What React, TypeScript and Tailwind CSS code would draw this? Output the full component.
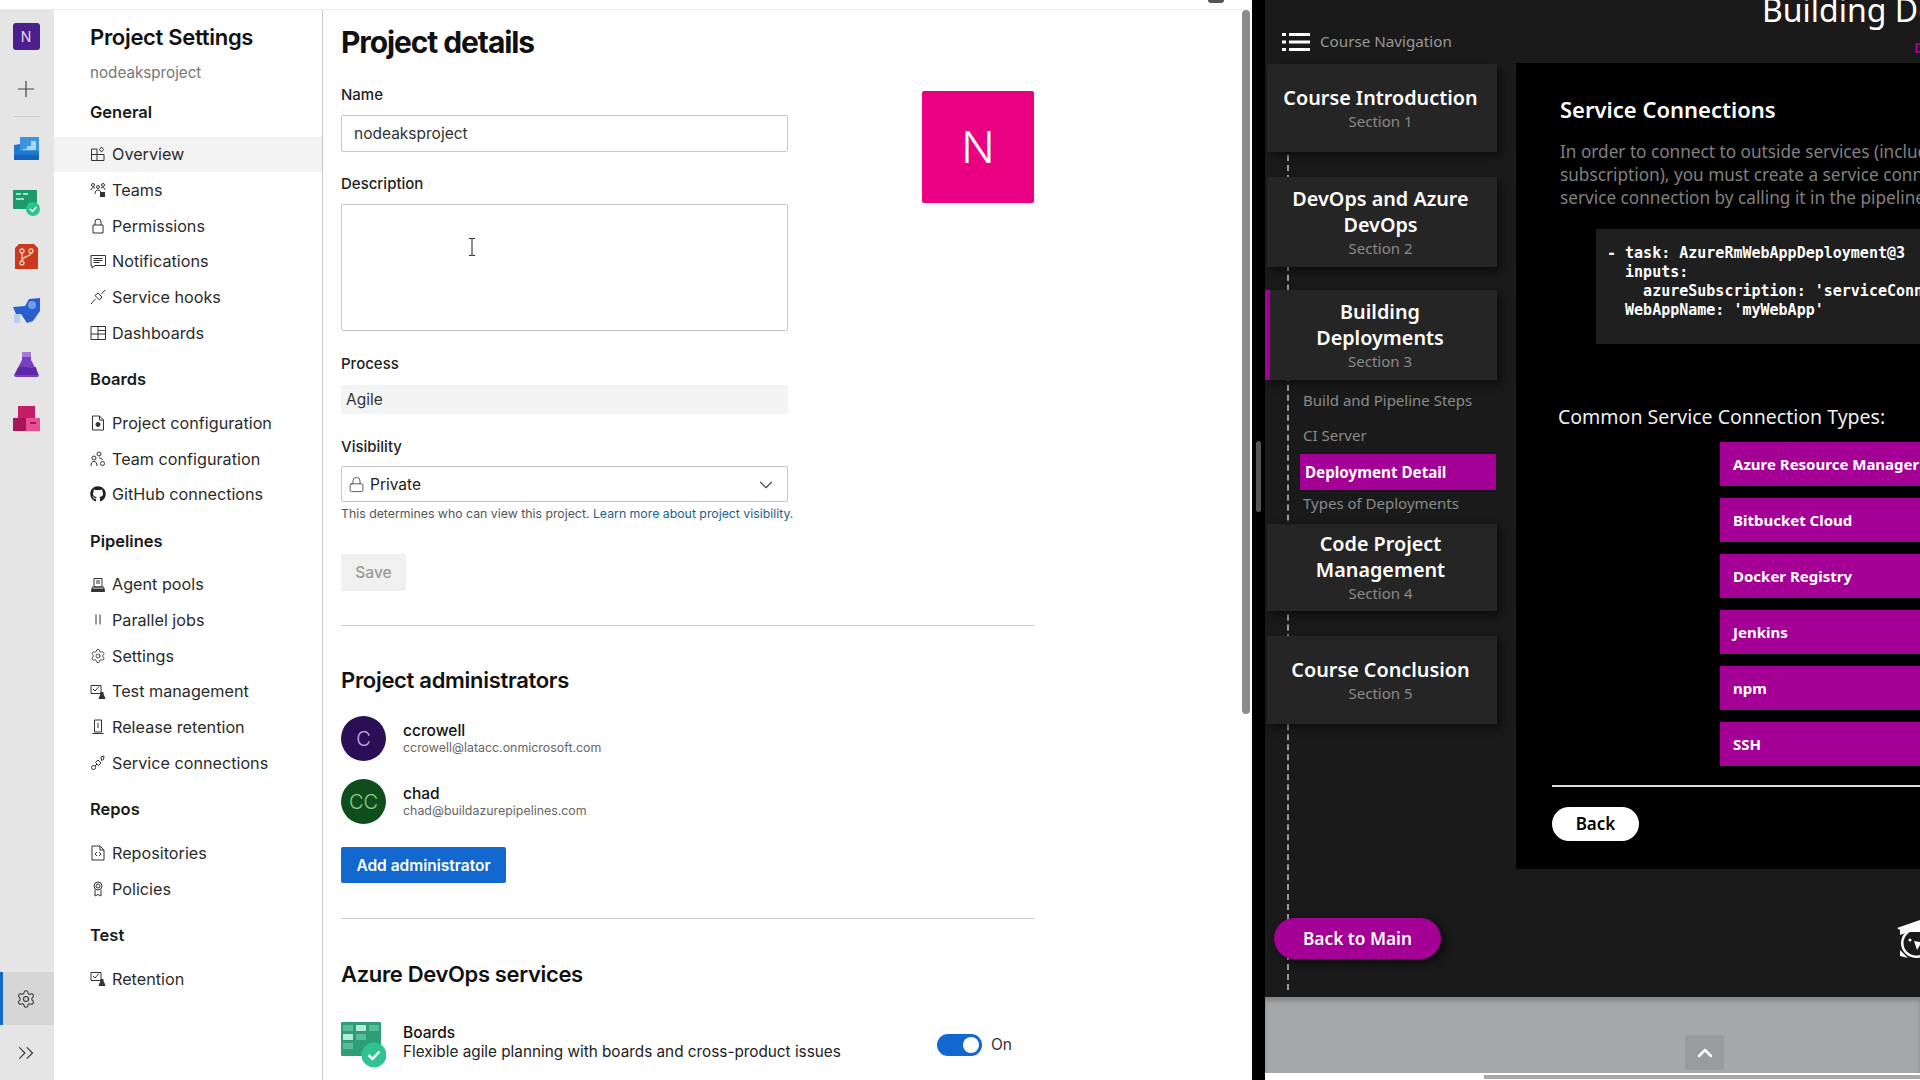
import type { ReactNode } from "react";
import { ChevronDown, ChevronUp, ChevronsRight, Lock, Plus, Settings } from "lucide-react";
import { FaGithub } from "react-icons/fa";

type IconProps = { children: ReactNode };

// line icons at the size of the Azure DevOps nav glyphs
function Glyph({ children }: IconProps) {
  return (
    <svg viewBox="0 0 16 16" fill="none" stroke="#333" strokeWidth="1" className="h-4 w-4 shrink-0">
      {children}
    </svg>
  );
}

const icons: Record<string, ReactNode> = {
  overview: (
    <Glyph>
      <path d="M1.5 3h5.5v11.5H1.5zM1.5 8.5h12.5v6H7M9.5 3.5l2-2.5 2 2.5-2 2.5z" />
    </Glyph>
  ),
  teams: (
    <Glyph>
      <circle cx="3" cy="3" r="1.5" />
      <circle cx="8" cy="5" r="1.5" />
      <circle cx="13" cy="3" r="1.5" />
      <path d="M1 8c0-2 2-3 4-2M15 8c0-2-2-3-4-2M5 12c0-3 1.500-4 3-4s3 1 3 4" />
      <rect x="10.500" y="10.500" width="4" height="4" fill="#333" />
    </Glyph>
  ),
  lock: (
    <Glyph>
      <path d="M3 7h10v8H3zM5 7V4a3 3 0 0 1 6 0v3" />
    </Glyph>
  ),
  chat: (
    <Glyph>
      <path d="M1 2.500h14.500v10H5l-3 2.500v-2.500H1zM3.500 5.500h9M3.500 7.500h9M3.500 9.500h6" />
    </Glyph>
  ),
  hook: (
    <Glyph>
      <path d="M1 15l3.500-4M11.500 5L15 1M5 6.500l4.500 4.500 2.500-3-4-4zM4.500 11l1-1" />
    </Glyph>
  ),
  dash: (
    <Glyph>
      <path d="M1 1.500h14.500v13H1zM1 9h14.500M8 1.500V14.500M8 5.500h7.500" />
    </Glyph>
  ),
  config: (
    <Glyph>
      <path d="M2.500 1h7l4 4v10h-11zM9.500 1v4h4" />
      <circle cx="8" cy="9.500" r="2" fill="#333" />
    </Glyph>
  ),
  teamcfg: (
    <Glyph>
      <circle cx="9" cy="3" r="2" />
      <circle cx="4" cy="7" r="2" />
      <path d="M1 15c0-3 1-4.500 3-4.500s3 1.500 3 4.500M9 7c2 0 3 .500 3.500 2" />
      <circle cx="12.500" cy="12.500" r="2" />
    </Glyph>
  ),
  github: <FaGithub className="h-4 w-4 shrink-0 text-[#222]" />,
  agent: (
    <Glyph>
      <path d="M4 1.500h8V10H4zM6 4h4M6 6h4M2.500 10h11l1 4.500h-13z" />
      <rect x="2" y="12" width="12" height="2.500" fill="#333" />
    </Glyph>
  ),
  parallel: (
    <Glyph>
      <path d="M6 2.500v10M10 2.500v10" />
    </Glyph>
  ),
  settings: <Settings className="h-4 w-4 shrink-0 text-[#333]" strokeWidth={1.3} />,
  test: (
    <Glyph>
      <path d="M1 1.500h10v8H1zM3 5l2 2 4-4.500" />
      <path d="M11 8v2l-2 4.500h6L13 10V8" fill="#333" />
    </Glyph>
  ),
  release: (
    <Glyph>
      <path d="M4.500 1h7v12h-7zM2.500 14.500h11M8 4v5" />
    </Glyph>
  ),
  plug: (
    <Glyph>
      <circle cx="3.500" cy="12.500" r="2" />
      <path d="M5 11l2-2M8 5l3 3-2.500 2.500-3-3zM11 5l1-1" />
      <path d="M11 2l3-1-.5 3.500-2 1z" />
    </Glyph>
  ),
  repo: (
    <Glyph>
      <path d="M2 1h8l4 4v10H2zM10 1v4h4M7 7l-2 2 2 2M9 7l2 2-2 2" />
    </Glyph>
  ),
  policy: (
    <Glyph>
      <circle cx="8" cy="5" r="4" />
      <circle cx="8" cy="5" r="2" />
      <path d="M5 9v6l3-1.500 3 1.500V9" />
    </Glyph>
  ),
};

const navSections = [
  {
    title: "Boards",
    items: [
      ["config", "Project configuration"],
      ["teamcfg", "Team configuration"],
      ["github", "GitHub connections"],
    ],
  },
  {
    title: "Pipelines",
    items: [
      ["agent", "Agent pools"],
      ["parallel", "Parallel jobs"],
      ["settings", "Settings"],
      ["test", "Test management"],
      ["release", "Release retention"],
      ["plug", "Service connections"],
    ],
  },
  {
    title: "Repos",
    items: [
      ["repo", "Repositories"],
      ["policy", "Policies"],
    ],
  },
  { title: "Test", items: [["test", "Retention"]] },
];

const generalItems = [
  ["overview", "Overview"],
  ["teams", "Teams"],
  ["lock", "Permissions"],
  ["chat", "Notifications"],
  ["hook", "Service hooks"],
  ["dash", "Dashboards"],
];

const connectionTypes = ["Azure Resource Manager", "Bitbucket Cloud", "Docker Registry", "Jenkins", "npm", "SSH"];

function NavRow({ icon, label, active }: { icon: string; label: string; active?: boolean }) {
  return (
    <div className={`flex h-[35.7px] items-center gap-[6px] pl-[36px] text-[16.2px] text-[#2b2b2b] ${active ? "bg-[#f3f3f3]" : ""}`}>
      {icons[icon]}
      <span>{label}</span>
    </div>
  );
}

function RailIcons() {
  return (
    <div className="flex flex-col items-center">
      <svg viewBox="0 0 27 27" className="h-[27px] w-[27px]">
        <path d="M7 2 H26 V24 a1 1 0 0 1-1 1 H2 a1 1 0 0 1-1-1 V10 L7 9z" fill="#1f78d1" />
        <path d="M7 2 H26 V16 H7z" fill="#3d93de" />
        <path d="M10 14 H14 V11 H18 V6 H23 V15 H10z" fill="#a8d8f5" />
        <path d="M1 20 H26 V24 a1 1 0 0 1-1 1 H2 a1 1 0 0 1-1-1z" fill="#1565b8" />
      </svg>
      <svg viewBox="0 0 27 27" className="mt-[27px] h-[27px] w-[27px]">
        <rect x="0" y="1" width="24" height="19" rx="1" fill="#1d9a6c" />
        <path d="M3 5h5M10 5h5M3 10h8" stroke="#9fe0c6" strokeWidth="2" />
        <circle cx="20" cy="20" r="7" fill="#2dc48d" />
        <path d="M17 20l2.500 2.500 4-4.500" stroke="#fff" strokeWidth="1.500" fill="none" />
      </svg>
      <svg viewBox="0 0 27 27" className="mt-[27px] h-[27px] w-[27px]">
        <path d="M2 5l4-4h15l4 4v21H2z" fill="#cc3a1e" />
        <circle cx="9" cy="8" r="2" fill="none" stroke="#f8c9ba" strokeWidth="1.300" />
        <circle cx="18" cy="8" r="2" fill="none" stroke="#f8c9ba" strokeWidth="1.300" />
        <circle cx="9" cy="20" r="2" fill="none" stroke="#f8c9ba" strokeWidth="1.300" />
        <path d="M9 10v8M18 10c0 4-9 3-9 8" stroke="#f8c9ba" strokeWidth="1.300" fill="none" />
      </svg>
      <svg viewBox="0 0 27 27" className="mt-[27px] h-[27px] w-[27px]">
        <path d="M0 10 L12 9 L16 2 L27 1 V14 L20 24 L14 26 L8 17 H3z" fill="#2a5fcf" />
        <circle cx="19" cy="8" r="4" fill="#6f9bea" />
        <path d="M1 17h6v9H1z" fill="#b5cdee" />
      </svg>
      <svg viewBox="0 0 27 27" className="mt-[27px] h-[27px] w-[27px]">
        <path d="M9 1h9v8l8 15a2 2 0 0 1-2 2H3a2 2 0 0 1-2-2L9 9z" fill="#7a3fc0" />
        <path d="M5 17c6-4 10 2 18-1l2 8H2z" fill="#5a28a8" />
        <path d="M9 1h9v5H9z" fill="#a678dc" />
      </svg>
      <svg viewBox="0 0 27 27" className="mt-[27px] h-[27px] w-[27px]">
        <path d="M5 1h17v13H5z" fill="#c41e6a" />
        <path d="M0 13h13v13H0z" fill="#a81657" />
        <path d="M13 13h14v13H13z" fill="#ea4f93" />
        <path d="M17 18h6" stroke="#a81657" strokeWidth="2" />
      </svg>
    </div>
  );
}

function Rail() {
  return (
    <aside className="flex w-[54px] shrink-0 flex-col items-center bg-[#e5e5e5] pt-[13px]">
      <div className="mr-[2px] flex h-[27px] w-[27px] items-center justify-center rounded-[3px] bg-[#4b1f8e] text-[14px] text-[#e6dcf5]">N</div>
      <div className="mr-[2px] flex flex-col items-center">
        <Plus className="mt-[26px] h-[26px] w-[26px] text-[#444]" strokeWidth={1.1} />
        <div className="mb-[18px] mt-[14px] h-px w-[27px] bg-[#d0d0d0]" />
        <RailIcons />
      </div>
      <div className="relative mb-[1px] mt-auto flex h-[53px] w-full items-center justify-center bg-[#d6d6d6] pr-[2px]">
        <div className="absolute bottom-0 left-0 top-0 w-[3px] bg-[#1568c8]" />
        <Settings className="h-[20px] w-[20px] text-[#333]" strokeWidth={1.3} />
      </div>
      <div className="flex h-[54px] items-center justify-center pr-[2px]">
        <ChevronsRight className="h-[26px] w-[26px] text-[#333]" strokeWidth={1} />
      </div>
    </aside>
  );
}

function SideNav() {
  return (
    <nav className="w-[269px] shrink-0 border-r border-[#c8c8c8] bg-white">
      <div className="pl-[36px] pt-[12px] text-[22px] font-semibold leading-[30px] tracking-[-0.3px] text-[#111]">Project Settings</div>
      <div className="pl-[36px] pt-[11px] text-[15.2px] leading-[20px] text-[#777]">nodeaksproject</div>
      <div className="pl-[36px] pt-[19px] text-[16.5px] font-semibold leading-[20px] text-[#1a1a1a]">General</div>
      <div className="pt-[14.5px]">
        {generalItems.map(([icon, label], i) => (
          <NavRow key={label} icon={icon} label={label} active={i === 0} />
        ))}
      </div>
      {navSections.map((s) => (
        <div key={s.title}>
          <div className="pl-[36px] pt-[18.5px] text-[16.5px] font-semibold leading-[20px] text-[#1a1a1a]">{s.title}</div>
          <div className="pt-[16px]">
            {s.items.map(([icon, label]) => (
              <NavRow key={label} icon={icon} label={label} />
            ))}
          </div>
        </div>
      ))}
    </nav>
  );
}

function Admin({ name, email, initials, avatar, text }: { name: string; email: string; initials: string; avatar: string; text: string }) {
  return (
    <div className="flex h-[45px] items-center gap-[17px]">
      <div className={`flex h-[45px] w-[45px] items-center justify-center rounded-full text-[20px] font-light ${avatar} ${text}`}>{initials}</div>
      <div className="pt-[2px]">
        <div className="text-[15.5px] font-medium leading-[16px] text-[#111]">{name}</div>
        <div className="text-[12.4px] leading-[17px] text-[#666]">{email}</div>
      </div>
    </div>
  );
}

function ProjectDetails() {
  return (
    <main className="relative min-w-0 flex-1 bg-white pl-[18px] pt-[14px]">
      <h1 className="text-[30px] font-bold leading-[36px] tracking-[-1.1px] text-[#111]">Project details</h1>

      <div className="flex">
        <div className="w-[447px]">
          <div className="mt-[25px] text-[15px] font-medium leading-[20px] text-[#222]">Name</div>
          <div className="mt-[10px] flex h-[37px] items-center rounded-[2px] border border-[#c8c8c8] pl-[12px] pt-[1px] text-[15.5px] text-[#333]">nodeaksproject</div>
          <div className="mt-[22px] text-[15px] font-medium leading-[20px] text-[#222]">Description</div>
          <div className="mt-[10px] h-[127px] rounded-[2px] border border-[#c8c8c8]" />
          <div className="mt-[23px] text-[15px] font-medium leading-[20px] text-[#222]">Process</div>
          <div className="mt-[11px] flex h-[29px] items-center bg-[#f4f4f4] pl-[5px] text-[15.5px] text-[#333]">Agile</div>
          <div className="mt-[23px] text-[15px] font-medium leading-[20px] text-[#222]">Visibility</div>
          <div className="mt-[9px] flex h-[36px] items-center rounded-[2px] border border-[#c8c8c8] pl-[6px] pr-[10px] pt-[1px] text-[15.5px] text-[#222]">
            <Lock className="h-[17px] w-[17px] text-[#444]" strokeWidth={1.2} />
            <span className="ml-[5px]">Private</span>
            <ChevronDown className="ml-auto h-[22px] w-[22px] text-[#444]" strokeWidth={1.2} />
          </div>
          <div className="mt-[3px] whitespace-nowrap text-[12.3px] leading-[18px] text-[#555]">
            This determines who can view this project. <span className="text-[#1c5f8f]">Learn more about project visibility.</span>
          </div>
          <div className="mt-[31px] flex h-[37px] w-[65px] items-center justify-center rounded-[2px] bg-[#f0f0f0] pt-[1px] text-[15.5px] font-medium text-[#999]">Save</div>
        </div>
        <div className="ml-[134px] mt-[31px] flex h-[112px] w-[112px] items-center justify-center rounded-[2px] bg-[#ea0083] text-[44px] font-light text-white">N</div>
      </div>

      <div className="w-[693px]">
        <div className="mt-[34px] h-px bg-[#d0d0d0]" />
        <h2 className="mt-[39px] text-[22px] font-semibold leading-[30px] tracking-[-0.3px] text-[#111]">Project administrators</h2>
        <div className="mt-[21px]">
          <Admin name="ccrowell" email="ccrowell@latacc.onmicrosoft.com" initials="C" avatar="bg-[#2b0f56]" text="text-[#c9a8ef]" />
        </div>
        <div className="mt-[18px]">
          <Admin name="chad" email="chad@buildazurepipelines.com" initials="CC" avatar="bg-[#0f4d1c]" text="text-[#8fce8f]" />
        </div>
        <div className="mt-[23px] flex h-[36px] w-[165px] items-center justify-center rounded-[2px] bg-[#1368cf] pt-[1px] text-[15.5px] font-semibold text-white">Add administrator</div>
        <div className="mt-[35px] h-px bg-[#d0d0d0]" />
        <h2 className="mt-[40px] text-[22px] font-semibold leading-[30px] tracking-[-0.35px] text-[#111]">Azure DevOps services</h2>
        <div className="mt-[33px] flex items-center gap-[17px] pr-[22px]">
          <svg viewBox="0 0 45 46" className="h-[46px] w-[45px] shrink-0">
            <rect x="0" y="0" width="40" height="34" rx="1" fill="#2f9e78" />
            <path d="M2 3h10v6H2zM15 3h10v6H15zM28 3h10v6H28zM2 12h10v6H2zM15 12h10v6H15zM2 21h10v6H2z" fill="#57bd98" />
            <path d="M2 12h10v6H2zM15 3h10v6H15z" fill="#b6ecd7" />
            <circle cx="33" cy="33" r="12.500" fill="#2fc48f" />
            <path d="M27.500 33l4 4 7-7.500" stroke="#fff" strokeWidth="2.500" fill="none" />
          </svg>
          <div className="-mt-[6px]">
            <div className="text-[15.5px] font-medium leading-[19px] text-[#111]">Boards</div>
            <div className="text-[15.3px] leading-[19px] text-[#222]">Flexible agile planning with boards and cross-product issues</div>
          </div>
          <div className="ml-auto flex items-center gap-[9px]">
            <div className="flex h-[22px] w-[45px] items-center justify-end rounded-full bg-[#1368cf] pr-[3px]">
              <div className="h-[16px] w-[16px] rounded-full bg-white" />
            </div>
            <span className="text-[15.5px] text-[#333]">On</span>
          </div>
        </div>
      </div>

      {/* text cursor sitting over the description box */}
      <svg viewBox="0 0 10 20" className="absolute left-[144px] top-[227px] h-[20px] w-[10px]" fill="none" stroke="#222" strokeWidth="1">
        <path d="M2 1.500h2.500L5 2.500l.5-1H8M5 2.500v15M2 18.500h2.500L5 17.500l.5 1H8" />
      </svg>
      <div className="absolute right-[2px] top-0 h-[704px] w-[8px] rounded-full bg-[#8c8c8c]" />
    </main>
  );
}

function CourseCard({ title, section, h, active }: { title: string[]; section: string; h: string; active?: boolean }) {
  return (
    <div className={`relative z-10 flex ${h} flex-col items-center justify-center bg-[#252525] shadow-[4px_4px_8px_rgba(0,0,0,0.55)] ${active ? "border-l-[5px] border-[#a50095] pr-[7px]" : "ml-[2px] pr-[3px]"}`}>
      {title.map((t) => (
        <div key={t} className="text-[19.8px] font-semibold leading-[26px] text-white">{t}</div>
      ))}
      <div className="text-[15px] leading-[20px] text-[#8a8a8a]">{section}</div>
    </div>
  );
}

function CourseNav() {
  return (
    <div className="relative w-[251px] shrink-0 pr-[19px]">
      <div className="absolute bottom-[7px] left-[22px] top-[155px] border-l-2 border-dashed border-[#9a9a9a]" />
      <div className="flex h-[63px] items-center gap-[10px] pl-[17px] pt-[20px] text-[15.2px] text-[#999]">
        <svg viewBox="0 0 28 18" className="h-[18px] w-[28px]" fill="#fff">
          <path d="M0 0h4v3H0zM7 0h21v3H7zM0 7.500h4v3H0zM7 7.500h21v3H7zM0 15h4v3H0zM7 15h21v3H7z" />
        </svg>
        <span>Course Navigation</span>
      </div>
      <div className="mt-[1px]">
        <CourseCard title={["Course Introduction"]} section="Section 1" h="h-[88px] pb-[1px]" />
      </div>
      <div className="mt-[25px]">
        <CourseCard title={["DevOps and Azure", "DevOps"]} section="Section 2" h="h-[90px]" />
      </div>
      <div className="mt-[23px]">
        <CourseCard title={["Building", "Deployments"]} section="Section 3" h="h-[90px]" active />
      </div>
      <div className="relative z-10 h-[144px] pl-[35px] pr-[1px] pt-px text-[15px] text-[#8a8a8a]">
        <div className="flex h-[36px] items-center pl-[3px] pt-[2px]">Build and Pipeline Steps</div>
        <div className="flex h-[36px] items-center pl-[3px]">CI Server</div>
        <div className="mt-px flex h-[36px] items-center bg-[#a50095] pl-[5px] text-[15.2px] font-bold text-white">Deployment Detail</div>
        <div className="flex h-[26px] items-center pl-[3px]">Types of Deployments</div>
      </div>
      <CourseCard title={["Code Project", "Management"]} section="Section 4" h="h-[87px] pb-[2px]" />
      <div className="mt-[25px]">
        <CourseCard title={["Course Conclusion"]} section="Section 5" h="h-[88px] pb-[1px]" />
      </div>
      <div className="relative z-10 ml-[9px] mt-[194px] flex h-[41px] w-[167px] items-center justify-center rounded-full bg-[#a50095] text-[17.3px] font-semibold text-white shadow-[4px_4px_8px_rgba(0,0,0,0.6)]">Back to Main</div>
    </div>
  );
}

function Lesson() {
  return (
    <div className="min-w-0 flex-1 overflow-hidden">
      <div className="h-[63px] overflow-hidden whitespace-nowrap">
        <div className="-mt-[10px] pl-[246px] text-[32px] leading-[40px] text-white">Building Deployments</div>
        <div className="mt-[8px] pl-[398px] text-[15px] font-bold leading-[18px] text-[#a50095]">Deployment Detail</div>
      </div>
      <div className="h-[806px] overflow-hidden whitespace-nowrap bg-black pl-[44px] pt-[31px]">
        <h3 className="text-[22px] font-semibold leading-[30px] text-white">Service Connections</h3>
        <p className="mt-[16px] text-[17.2px] leading-[23px] text-[#808080]">
          In order to connect to outside services (including your Azure
          <br />
          subscription), you must create a service connection and use the
          <br />
          service connection by calling it in the pipeline
        </p>
        <pre className="ml-[36px] mt-[20px] h-[115px] bg-[#1f1f1f] pl-[11px] pt-[15px] text-[15px] font-bold leading-[19px] text-white [font-family:'DejaVu_Sans_Mono',monospace]">
          {"- task: AzureRmWebAppDeployment@3\n  inputs:\n    azureSubscription: 'serviceConnection'\n  WebAppName: 'myWebApp'"}
        </pre>
        <div className="-ml-[2px] mt-[59px] text-[19.5px] leading-[28px] text-[#eee]">Common Service Connection Types:</div>
        <div className="ml-[160px] mt-[11px] flex flex-col gap-[12px]">
          {connectionTypes.map((c) => (
            <div key={c} className="flex h-[44px] items-center bg-[#a50095] pl-[13px] text-[15px] font-bold text-white">{c}</div>
          ))}
        </div>
        <div className="-ml-[8px] mt-[19px] h-[2px] bg-[#ddd]" />
        <div className="-ml-[8px] mt-[20px] flex h-[34px] w-[87px] items-center justify-center rounded-full bg-white text-[17px] font-semibold text-black">Back</div>
      </div>
      <div className="flex justify-end overflow-hidden pt-[51px]">
        {/* owl logo, cut off by the window edge */}
        <svg viewBox="0 0 28 40" className="h-[40px] w-[28px]">
          <circle cx="24" cy="23" r="15" fill="#fff" />
          <circle cx="24" cy="23" r="12.500" fill="#1a1a1a" />
          <path d="M8 30v6l8 2z" fill="#fff" />
          <path d="M5 8L28 0V12L16 12L8 15V10z" fill="#fff" />
          <circle cx="18" cy="20" r="1.500" fill="#fff" />
          <path d="M22 21l6 1v3l-3 5z" fill="#fff" />
        </svg>
      </div>
    </div>
  );
}

export default function App() {
  return (
    <div className="flex h-[1080px] w-[1920px] overflow-hidden bg-black [font-family:'Inter',sans-serif]">
      <div className="flex w-[1252px] shrink-0 flex-col bg-white">
        <div className="relative h-[10px] shrink-0 border-b border-[#ececec] bg-white">
          <div className="absolute left-[1208px] top-0 h-[3px] w-[16px] rounded-b-full bg-[#555]" />
        </div>
        <div className="flex min-h-0 flex-1">
          <Rail />
          <SideNav />
          <ProjectDetails />
        </div>
      </div>

      <div className="relative w-[13px] shrink-0">
        <div className="absolute left-[4px] top-[441px] h-[71px] w-[5px] rounded-full bg-[#555]" />
      </div>

      <div className="flex min-w-0 flex-1 flex-col [font-family:'Noto_Sans',sans-serif]">
        <div className="flex h-[997px] shrink-0 bg-[#1a1a1a]">
          <CourseNav />
          <Lesson />
        </div>
        <div className="flex h-[76px] shrink-0 items-end bg-[#a5a7a9] pl-[420px] shadow-[inset_0_4px_4px_rgba(0,0,0,0.2)]">
          <div className="mb-[3px] flex h-[35px] w-[39px] items-center justify-center rounded-[3px] bg-[#999b9d]">
            <ChevronUp className="h-[24px] w-[24px] text-white" strokeWidth={2.5} />
          </div>
        </div>
        <div className="flex h-[7px] shrink-0 items-center bg-white pl-[219px]">
          <div className="h-[4px] w-full bg-[#a8a8a8]" />
        </div>
      </div>
    </div>
  );
}
